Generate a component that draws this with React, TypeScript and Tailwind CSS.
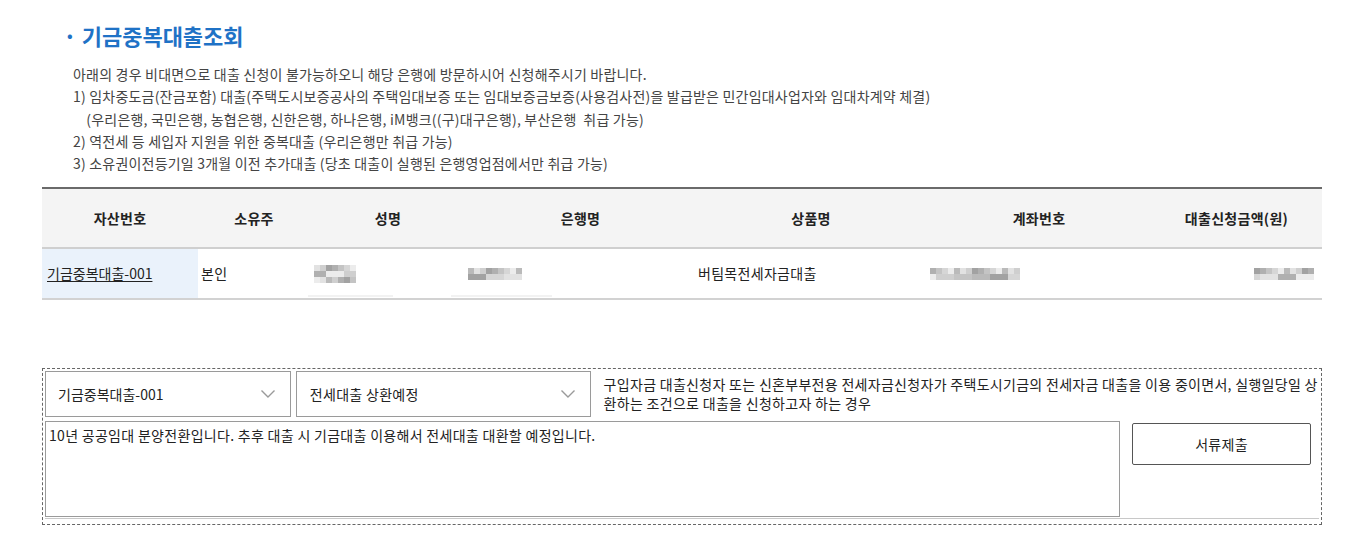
import React from 'react';

const grays = ['#ececec', '#d6d6d6', '#c4c4c4', '#b0b0b0', '#a2a2a2', '#cfcfcf', '#e2e2e2', '#bababa'];

// pixelated mosaic used for masked personal data
function Mosaic({ cols, rows, seed }: { cols: number; rows: number; seed: number }) {
    const cell = 6;
    const rects = [];
    for (let r = 0; r < rows; r++) {
        for (let c = 0; c < cols; c++) {
            const v = (c * 7 + r * 13 + seed * 5 + ((c * r + seed) % 3)) % grays.length;
            rects.push(<rect key={`${r}-${c}`} x={c * cell} y={r * cell} width={cell} height={cell} fill={grays[v]} />);
        }
    }
    return (
        <svg width={cols * cell} height={rows * cell} className="block">
            {rects}
        </svg>
    );
}

function Chevron() {
    return (
        <svg width="16" height="10" viewBox="0 0 16 10" fill="none" stroke="#9a9a9a" strokeWidth="1.4">
            <path d="M1.5 1.5 L8 8 L14.5 1.5" />
        </svg>
    );
}

const notes = [
    '아래의 경우 비대면으로 대출 신청이 불가능하오니 해당 은행에 방문하시어 신청해주시기 바랍니다.',
    '1) 임차중도금(잔금포함) 대출(주택도시보증공사의 주택임대보증 또는 임대보증금보증(사용검사전)을 발급받은 민간임대사업자와 임대차계약 체결)',
    '\u00a0\u00a0\u00a0\u00a0(우리은행, 국민은행, 농협은행, 신한은행, 하나은행, iM뱅크((구)대구은행), 부산은행 \u00a0취급 가능)',
    '2) 역전세 등 세입자 지원을 위한 중복대출 (우리은행만 취급 가능)',
    '3) 소유권이전등기일 3개월 이전 추가대출 (당초 대출이 실행된 은행영업점에서만 취급 가능)',
];

export default function App() {
    return (
        <div className="min-h-screen bg-white font-['Noto_Sans_CJK_KR',sans-serif] text-[#222] px-[42px] pt-[19px]" style={{ width: 1357 }}>
            {/* Title */}
            <h2 className="pl-[25px] text-[22px] font-bold leading-[32px] text-[#1f72c6] flex items-center">
                <span className="text-[15px] mr-[9px]">•</span>
                기금중복대출조회
            </h2>

            {/* Notes */}
            <div className="mt-[12px] pl-[31px] text-[14px] leading-[22.3px] text-[#444] tracking-[0.2px]">
                {notes.map((n, i) => (
                    <p key={i} className="whitespace-pre">{n}</p>
                ))}
            </div>

            {/* Table */}
            <table className="mt-[13px] w-[1280px] table-fixed border-collapse text-[14px] tracking-[0.3px]">
                <colgroup>
                    <col className="w-[156px]" />
                    <col className="w-[112px]" />
                    <col className="w-[156px]" />
                    <col className="w-[229px]" />
                    <col className="w-[232px]" />
                    <col className="w-[224px]" />
                    <col className="w-[171px]" />
                </colgroup>
                <thead>
                    <tr className="h-[60px] bg-[#f4f4f4] border-t-[2px] border-t-[#6a6a6a] border-b-[2px] border-b-[#cfcfcf]">
                        <th className="font-bold">자산번호</th>
                        <th className="font-bold">소유주</th>
                        <th className="font-bold">성명</th>
                        <th className="font-bold">은행명</th>
                        <th className="font-bold">상품명</th>
                        <th className="font-bold">계좌번호</th>
                        <th className="font-bold">대출신청금액(원)</th>
                    </tr>
                </thead>
                <tbody>
                    <tr className="h-[49px] border-b-[2px] border-b-[#d2d2d2]">
                        <td className="bg-[#eaf2fb] pl-[5px] tracking-[0px]">
                            <a className="underline underline-offset-[2px] text-[#222]">기금중복대출-001</a>
                        </td>
                        <td className="pl-[3px]">본인</td>
                        <td className="pl-[2px]">
                            <div className="relative h-[49px] flex items-center">
                                <div className="pl-[2px]"><Mosaic cols={7} rows={3} seed={1} /></div>
                                <div className="absolute bottom-[1px] left-[-4px] w-[85px] h-[2px] bg-[#f2f2f2]" />
                            </div>
                        </td>
                        <td className="pl-[2px]">
                            <div className="relative h-[49px] flex items-center">
                                <div><Mosaic cols={9} rows={2} seed={3} /></div>
                                <div className="absolute bottom-[1px] left-[-17px] w-[101px] h-[2px] bg-[#f2f2f2]" />
                            </div>
                        </td>
                        <td className="pl-[3px]">버팀목전세자금대출</td>
                        <td className="pl-[3px]">
                            <Mosaic cols={15} rows={2} seed={5} />
                        </td>
                        <td className="pr-[8px]">
                            <div className="flex justify-end"><Mosaic cols={10} rows={2} seed={2} /></div>
                        </td>
                    </tr>
                </tbody>
            </table>

            {/* Application form */}
            <div className="mt-[68px] w-[1280px] h-[157px] border border-dashed border-[#666] p-[2px] text-[14px] tracking-[0.3px]">
                <div className="border-b border-b-[#c8c8c8] pb-[1px]">
                    <div className="flex items-start">
                        <div className="w-[246px] h-[46px] border border-[#9a9a9a] flex items-center justify-between pl-[12px] pr-[14px] tracking-[0px]">
                            <span>기금중복대출-001</span>
                            <Chevron />
                        </div>
                        <div className="ml-[5px] w-[295px] h-[46px] border border-[#9a9a9a] flex items-center justify-between pl-[13px] pr-[14px]">
                            <span>전세대출 상환예정</span>
                            <Chevron />
                        </div>
                        <p className="ml-[13px] mt-[4px] w-[716px] leading-[19px]">
                            구입자금 대출신청자 또는 신혼부부전용 전세자금신청자가 주택도시기금의 전세자금 대출을 이용 중이면서, 실행일당일 상환하는 조건으로 대출을 신청하고자 하는 경우
                        </p>
                    </div>
                    <div className="mt-[4px] flex items-start">
                        <div className="w-[1075px] h-[96px] border border-[#9a9a9a] px-[3px] pt-[4px] leading-[18px]">
                            10년 공공임대 분양전환입니다. 추후 대출 시 기금대출 이용해서 전세대출 대환할 예정입니다.
                        </div>
                        <button className="ml-[12px] mt-[2px] w-[179px] h-[42px] border border-[#555] rounded-[2px] bg-white text-[#222]">
                            서류제출
                        </button>
                    </div>
                </div>
            </div>
        </div>
    );
}
